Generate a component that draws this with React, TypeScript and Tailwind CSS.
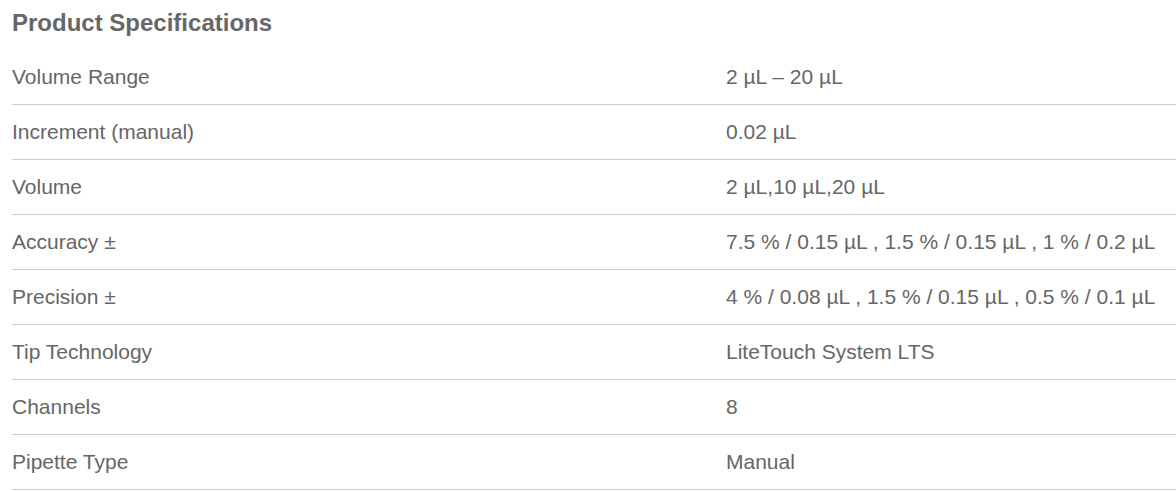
import React from "react";

const rows: [string, string][] = [
  ["Volume Range", "2 µL – 20 µL"],
  ["Increment (manual)", "0.02 µL"],
  ["Volume", "2 µL,10 µL,20 µL"],
  ["Accuracy ±", "7.5 % / 0.15 µL , 1.5 % / 0.15 µL , 1 % / 0.2 µL"],
  ["Precision ±", "4 % / 0.08 µL , 1.5 % / 0.15 µL , 0.5 % / 0.1 µL"],
  ["Tip Technology", "LiteTouch System LTS"],
  ["Channels", "8"],
  ["Pipette Type", "Manual"],
];

export default function App() {
  return (
    <div
      className="w-[1176px] h-[491px] bg-white pl-[12px] overflow-hidden text-[#666666]"
      style={{ fontFamily: '"Liberation Sans", Arial, sans-serif' }}
    >
      <h2 className="text-[24px] font-bold leading-[29px] pt-[8px] text-[#666666]">
        Product Specifications
      </h2>
      <div className="mt-[13px]">
        {rows.map(([k, v]) => (
          <div
            key={k}
            className="grid grid-cols-[714px_1fr] h-[55px] items-center border-b border-[#cccccc] text-[21px] leading-[24px]"
          >
            <div>{k}</div>
            <div>{v}</div>
          </div>
        ))}
      </div>
    </div>
  );
}
